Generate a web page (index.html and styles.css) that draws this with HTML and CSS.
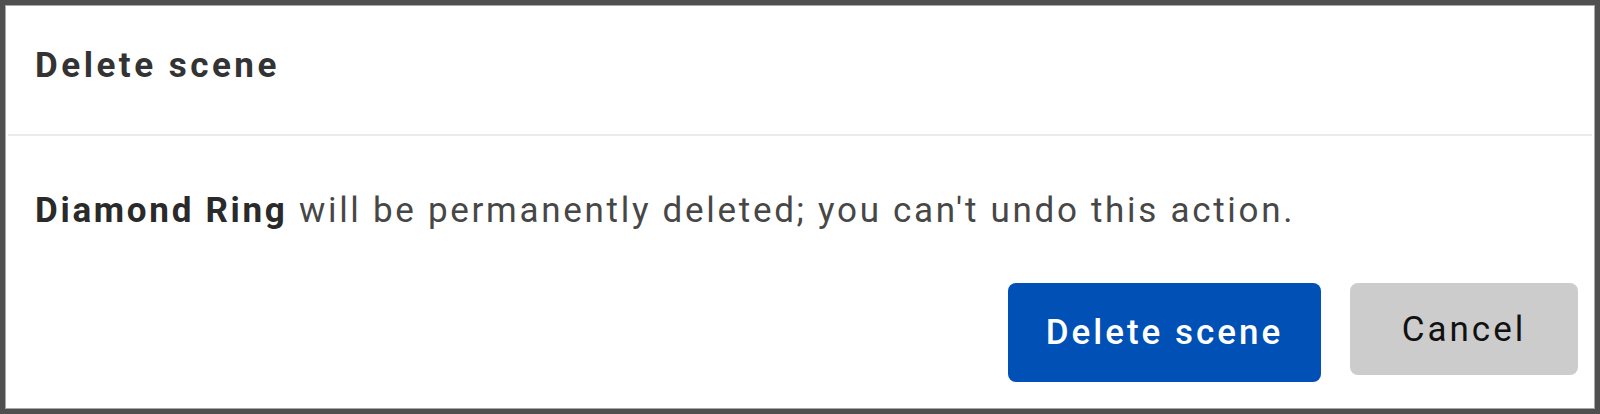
FILE: index.html
```html
<!DOCTYPE html>
<html lang="en">
<head>
<meta charset="utf-8">
<title>Delete scene</title>
<link rel="stylesheet" href="styles.css">
</head>
<body>
<div class="dialog">
  <div class="dialog-header">
    <h1 class="dialog-title">Delete scene</h1>
  </div>
  <div class="dialog-body">
    <p class="dialog-message"><strong>Diamond Ring</strong> will be permanently deleted; you can't undo this action.</p>
    <div class="dialog-actions">
      <button class="btn btn-primary">Delete scene</button>
      <button class="btn btn-secondary">Cancel</button>
    </div>
  </div>
</div>
</body>
</html>
```
FILE: styles.css
```css
* { box-sizing: border-box; }
html, body { margin: 0; padding: 0; background: #ffffff; }
body {
  width: 1600px;
  height: 414px;
  font-family: Roboto, "Liberation Sans", sans-serif;
  color: #333333;
}
.dialog {
  width: 1600px;
  height: 414px;
  border: 5px solid #4f4f4f;
  box-shadow: inset 0 0 0 1px #a8a8a8;
  background: #ffffff;
  display: flex;
  flex-direction: column;
}
.dialog-header {
  height: 131px;
  margin: 0 3px;
  border-bottom: 2px solid #ebebeb;
  display: flex;
  align-items: center;
  padding: 0 0 8px 27px;
}
.dialog-title {
  margin: 0;
  font-size: 35px;
  font-weight: 700;
  color: #333333;
  letter-spacing: 3.5px;
}
.dialog-body {
  flex: 1;
  display: flex;
  flex-direction: column;
  padding: 0 17px 0 30px;
}
.dialog-message {
  margin: 54px 0 0 0;
  font-size: 35px;
  line-height: 41px;
  font-weight: 400;
  color: #474747;
  letter-spacing: 2.7px;
}
.dialog-message strong {
  font-weight: 700;
  color: #2a2a2a;
}
.dialog-actions {
  display: flex;
  justify-content: flex-end;
  align-items: flex-start;
  gap: 29px;
  margin-top: 52px;
}
.btn {
  font-family: Roboto, "Liberation Sans", sans-serif;
  font-size: 35px;
  font-weight: 500;
  border: none;
  border-radius: 8px;
  padding: 0;
  display: flex;
  align-items: center;
  justify-content: center;
  letter-spacing: 3px;
}
.btn-primary {
  width: 313px;
  height: 99px;
  background: #0050b5;
  color: #ffffff;
}
.btn-secondary {
  width: 228px;
  height: 92px;
  background: #cccccc;
  color: #111111;
  font-weight: 400;
}
```
